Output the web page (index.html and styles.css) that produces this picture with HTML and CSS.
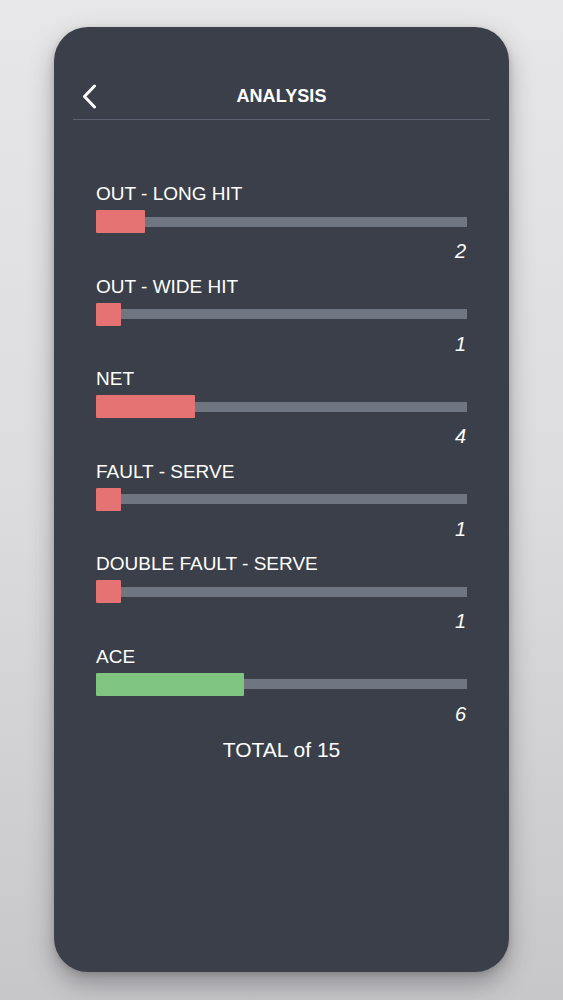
FILE: index.html
```html
<!DOCTYPE html>
<html lang="en">
<head>
  <meta charset="UTF-8" />
  <meta name="viewport" content="width=device-width, initial-scale=1" />
  <title>Analysis</title>
  <link rel="stylesheet" href="styles.css">
</head>
<body>
  <div class="phone">
    <header class="topbar">
      <button class="back" aria-label="Back">
        <svg width="15" height="25" viewBox="0 0 15 25">
          <polyline points="12.5,2 2.5,12.5 12.5,23" fill="none" stroke="#fff" stroke-width="3" stroke-linecap="round" stroke-linejoin="round" />
        </svg>
      </button>
      <h1>ANALYSIS</h1>
      <span></span>
    </header>

    <div class="stats" id="stats"></div>
    <div class="total" id="total"></div>
  </div>

  <script>
    const shots = [
      { label: 'OUT - LONG HIT', count: 2, kind: 'miss' },
      { label: 'OUT - WIDE HIT', count: 1, kind: 'miss' },
      { label: 'NET', count: 4, kind: 'miss' },
      { label: 'FAULT - SERVE', count: 1, kind: 'miss' },
      { label: 'DOUBLE FAULT - SERVE', count: 1, kind: 'miss' },
      { label: 'ACE', count: 6, kind: 'win' },
    ];

    const total = shots.reduce((sum, s) => sum + s.count, 0);
    const statsDiv = document.getElementById('stats');

    shots.forEach(s => {
      const row = document.createElement('div');
      row.className = 'stat';
      row.innerHTML = `
        <div class="stat-label">${s.label}</div>
        <div class="bar">
          <div class="bar-fill ${s.kind}" style="width:${(s.count / total * 100).toFixed(2)}%"></div>
        </div>
        <div class="stat-count">${s.count}</div>`;
      statsDiv.appendChild(row);
    });

    document.getElementById('total').textContent = `TOTAL of ${total}`;
  </script>
</body>
</html>
```

FILE: styles.css
```css
:root {
  --card: #3a3f49;
  --track: #6f7681;
  --red: #e57373;
  --green: #7fc580;
  --white: #ffffff;
  --line: #596070;
}
body {
  margin: 0;
  min-height: 1000px;
  box-sizing: border-box;
  padding: 27px 54px 28px;
  background: linear-gradient(180deg, #e7e7e9 0%, #dcdcde 50%, #c7c7c9 100%);
  font-family: 'Liberation Sans', Arial, sans-serif;
  color: var(--white);
}
.phone {
  height: 945px;
  background: var(--card);
  border-radius: 34px;
  box-shadow: 0 12px 24px rgba(40, 40, 50, 0.35), 0 2px 6px rgba(0, 0, 0, 0.15);
  display: flex;
  flex-direction: column;
}
.topbar {
  margin: 0 19px;
  padding: 52px 0 5px;
  border-bottom: 1px solid var(--line);
  display: grid;
  grid-template-columns: 1fr auto 1fr;
  align-items: center;
  height: 35px;
}
.back {
  background: none;
  border: none;
  padding: 0 0 0 9px;
  display: flex;
  align-items: center;
  cursor: pointer;
  justify-self: start;
}
.topbar h1 {
  margin: 0;
  font-size: 18px;
  font-weight: 700;
  letter-spacing: 0.1px;
}
.stats {
  padding: 63px 42px 0;
  display: flex;
  flex-direction: column;
  gap: 13.5px;
}
.stat-label {
  font-size: 19px;
  line-height: 22px;
}
.bar {
  margin-top: 5px;
  height: 23px;
  display: flex;
  align-items: center;
  background: linear-gradient(var(--track), var(--track)) center / 100% 10px no-repeat;
}
.bar-fill {
  height: 23px;
  border-radius: 1px;
}
.bar-fill.miss {
  background: var(--red);
}
.bar-fill.win {
  background: var(--green);
}
.stat-count {
  margin-top: 7px;
  text-align: right;
  font-size: 20px;
  font-style: italic;
  line-height: 22px;
  padding-right: 1px;
}
.total {
  margin-top: 12px;
  text-align: center;
  font-size: 21px;
  line-height: 26px;
}
```
